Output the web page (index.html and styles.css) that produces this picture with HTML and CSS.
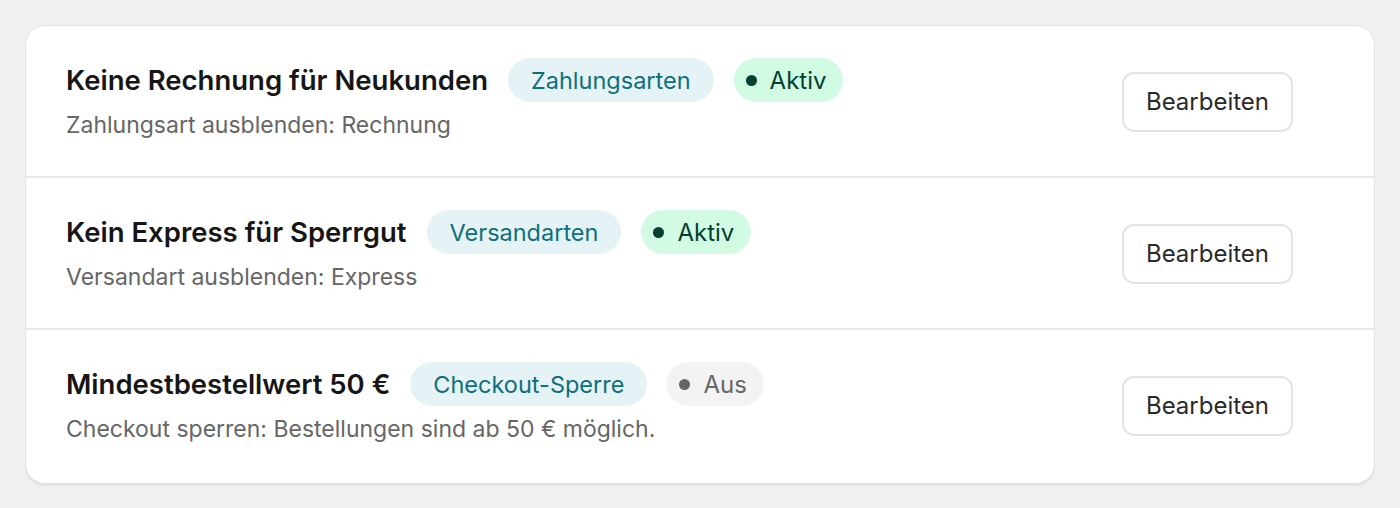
FILE: index.html
```html
<!DOCTYPE html>
<html lang="de">

<head>
    <meta charset="UTF-8">
    <meta name="viewport" content="width=device-width, initial-scale=1.0">
    <title>Checkout-Regeln</title>
    <link rel="stylesheet" href="styles.css">
</head>

<body>
    <div class="rules-card">
        <div class="rule-row">
            <div class="rule-info">
                <div class="rule-head">
                    <h2 class="rule-title">Keine Rechnung für Neukunden</h2>
                    <span class="tag">Zahlungsarten</span>
                    <span class="status status-on"><i class="dot"></i>Aktiv</span>
                </div>
                <p class="rule-desc">Zahlungsart ausblenden: Rechnung</p>
            </div>
            <button class="edit-btn">Bearbeiten</button>
        </div>

        <div class="rule-row">
            <div class="rule-info">
                <div class="rule-head">
                    <h2 class="rule-title">Kein Express für Sperrgut</h2>
                    <span class="tag">Versandarten</span>
                    <span class="status status-on"><i class="dot"></i>Aktiv</span>
                </div>
                <p class="rule-desc">Versandart ausblenden: Express</p>
            </div>
            <button class="edit-btn">Bearbeiten</button>
        </div>

        <div class="rule-row">
            <div class="rule-info">
                <div class="rule-head">
                    <h2 class="rule-title">Mindestbestellwert 50 €</h2>
                    <span class="tag">Checkout-Sperre</span>
                    <span class="status status-off"><i class="dot"></i>Aus</span>
                </div>
                <p class="rule-desc">Checkout sperren: Bestellungen sind ab 50 € möglich.</p>
            </div>
            <button class="edit-btn">Bearbeiten</button>
        </div>
    </div>
</body>

</html>
```

FILE: styles.css
```css
* {
    margin: 0;
    padding: 0;
    box-sizing: border-box;
}

body {
    font-family: 'Inter', 'Liberation Sans', sans-serif;
    background: #f0f0f0;
    padding: 25px;
    color: #1a1a1a;
}

.rules-card {
    background: #fff;
    border: 1px solid #e2e2e2;
    border-radius: 20px;
    box-shadow: 0 2px 0 #e2e2e2;
    overflow: hidden;
}

.rule-row {
    display: flex;
    align-items: center;
    justify-content: space-between;
    padding: 32px 81px 37px 40px;
    border-bottom: 2px solid #e8e8e8;
}

.rule-row:last-child {
    border-bottom: none;
    padding-bottom: 40px;
}

.rule-head {
    display: flex;
    align-items: center;
    gap: 20px;
}

.rule-title {
    font-size: 27.5px;
    font-weight: 600;
    color: #161616;
}

.tag,
.status {
    display: inline-flex;
    align-items: center;
    height: 44px;
    padding: 0 23px;
    border-radius: 22px;
    font-size: 23.5px;
}

.tag {
    background: #e5f3f6;
    color: #0e6f7c;
}

.status {
    padding: 0 17px 0 12px;
    font-size: 24px;
}

.dot {
    width: 11px;
    height: 11px;
    border-radius: 50%;
    margin-right: 13px;
    background: currentColor;
}

.status-on {
    background: #d1fbe3;
    color: #053f2f;
}

.status-off {
    background: #f3f3f3;
    color: #666;
}

.rule-desc {
    margin-top: 9px;
    font-size: 23px;
    line-height: 28px;
    color: #666;
}

.edit-btn {
    font-family: inherit;
    font-size: 24px;
    color: #2a2a2a;
    background: #fff;
    border: 2px solid #e3e3e3;
    border-radius: 12px;
    width: 171px;
    height: 60px;
    margin-top: 6px;
    cursor: pointer;
}
```
